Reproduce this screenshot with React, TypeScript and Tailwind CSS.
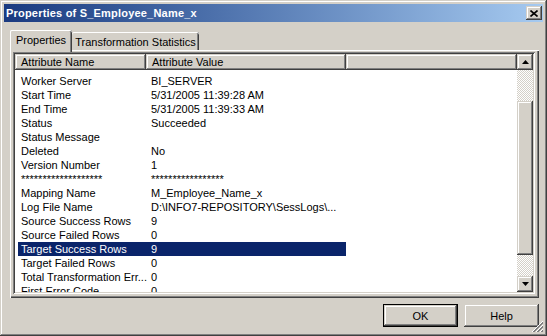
const rows: [string, string][] = [
  ['Worker Server', 'BI_SERVER'],
  ['Start Time', '5/31/2005 11:39:28 AM'],
  ['End Time', '5/31/2005 11:39:33 AM'],
  ['Status', 'Succeeded'],
  ['Status Message', ''],
  ['Deleted', 'No'],
  ['Version Number', '1'],
  ['*******************', '*****************'],
  ['Mapping Name', 'M_Employee_Name_x'],
  ['Log File Name', 'D:\\INFO7-REPOSITORY\\SessLogs\\...'],
  ['Source Success Rows', '9'],
  ['Source Failed Rows', '0'],
  ['Target Success Rows', '9'],
  ['Target Failed Rows', '0'],
  ['Total Transformation Err...', '0'],
  ['First Error Code', '0'],
]

const raised =
  'shadow-[inset_-1px_-1px_#404040,inset_1px_1px_#d4d0c8,inset_-2px_-2px_#808080,inset_2px_2px_#ffffff]'
const checker =
  'bg-[image:repeating-conic-gradient(#d4d0c8_0%_25%,#ffffff_0%_50%)] bg-[length:2px_2px]'

const Arrow = ({ up }: { up?: boolean }) => (
  <div className={`flex h-[16px] w-[16px] items-center justify-center bg-[#d4d0c8] ${raised}`}>
    <svg width="7" height="4" viewBox="0 0 7 4">
      {up ? <path d="M3.5 0 L7 4 L0 4 Z" fill="#000" /> : <path d="M0 0 L7 0 L3.5 4 Z" fill="#000" />}
    </svg>
  </div>
)

const HeaderCell = ({ label, className }: { label: string; className: string }) => (
  <div className={`flex h-[16px] items-center bg-[#d4d0c8] pl-[6px] ${raised} ${className}`}>
    {label}
  </div>
)

const App: React.FC = () => {
  return (
    <div className="relative flex h-[336px] w-[547px] flex-col bg-[#d4d0c8] p-[4px] font-['Liberation_Sans',Arial,sans-serif] text-[11px] leading-[14px] text-black shadow-[inset_-1px_-1px_#404040,inset_1px_1px_#d4d0c8,inset_-2px_-2px_#808080,inset_2px_2px_#ffffff]">
      <div className="flex h-[18px] items-center bg-linear-to-r from-[#1a3a80] to-[#a6caf0] pl-[2px] pr-[1px]">
        <span className="flex-1 text-[11px] font-bold tracking-[0.2px] text-white">
          Properties of S_Employee_Name_x
        </span>
        <div className={`flex h-[14px] w-[16px] items-center justify-center bg-[#d4d0c8] ${raised}`}>
          <svg width="8" height="7" viewBox="0 0 8 7">
            <path d="M0.5 0.5 L7.5 6.5 M7.5 0.5 L0.5 6.5" stroke="#000" strokeWidth="1.6" />
          </svg>
        </div>
      </div>

      <div className="ml-[6px] mt-[8px] flex h-[20px] items-end">
        <div className="relative z-10 -mb-[2px] flex h-[22px] w-[62px] items-start justify-center rounded-t-[2px] bg-[#d4d0c8] pt-[3px] shadow-[inset_1px_0_#ffffff,inset_0_1px_#ffffff,inset_-1px_0_#404040,inset_-2px_0_#808080]">
          Properties
        </div>
        <div className="flex h-[18px] w-[127px] items-start justify-center rounded-t-[2px] pt-[3px] shadow-[inset_0_1px_#ffffff,inset_-1px_0_#404040,inset_-2px_0_#808080]">
          Transformation Statistics
        </div>
      </div>

      <div className="ml-[6px] mr-[4px] h-[248px] pb-[2px] pl-[3px] pr-[4px] pt-[2px] shadow-[inset_1px_1px_#ffffff,inset_-1px_-1px_#404040,inset_-2px_-2px_#808080]">
        <div className="flex h-[242px] w-[522px] bg-white p-[2px] shadow-[inset_1px_1px_#808080,inset_-1px_-1px_#ffffff,inset_2px_2px_#404040,inset_-2px_-2px_#d4d0c8]">
          <div className="flex w-[502px] flex-col overflow-hidden">
            <div className="flex">
              <HeaderCell label="Attribute Name" className="w-[131px]" />
              <HeaderCell label="Attribute Value" className="w-[200px]" />
              <HeaderCell label="" className="flex-1" />
            </div>
            <div className="mt-[4px] flex flex-col">
              {rows.map(([name, value], i) => (
                <div
                  key={i}
                  className={`ml-[3px] flex h-[14px] w-[328px] shrink-0 items-center whitespace-nowrap ${
                    i === 12 ? 'bg-[#0a246a] text-white' : ''
                  }`}
                >
                  <div className="w-[130px] pl-[3px]">{name}</div>
                  <div className="pl-[3px]">{value}</div>
                </div>
              ))}
            </div>
          </div>
          <div className="flex w-[16px] flex-col">
            <Arrow up />
            <div className={`h-[31px] ${checker}`} />
            <div className={`h-[154px] bg-[#d4d0c8] ${raised}`} />
            <div className={`flex-1 ${checker}`} />
            <Arrow />
          </div>
        </div>
      </div>

      <div className="mt-[6px] flex justify-end gap-[6px] pr-[4px]">
        <div className="h-[23px] w-[75px] border border-black">
          <div className={`flex h-full w-full items-center justify-center ${raised}`}>OK</div>
        </div>
        <div className={`flex h-[23px] w-[75px] items-center justify-center ${raised}`}>Help</div>
      </div>

      <svg className="absolute bottom-[3px] right-[3px]" width="12" height="12" viewBox="0 0 12 12">
        <path d="M11 1 L1 11 M11 5 L5 11 M11 9 L9 11" stroke="#808080" strokeWidth="1" />
        <path d="M11 2 L2 11 M11 6 L6 11 M11 10 L10 11" stroke="#808080" strokeWidth="1" />
        <path d="M11 0 L0 11 M11 4 L4 11 M11 8 L8 11" stroke="#ffffff" strokeWidth="1" />
      </svg>
    </div>
  )
}

export default App
